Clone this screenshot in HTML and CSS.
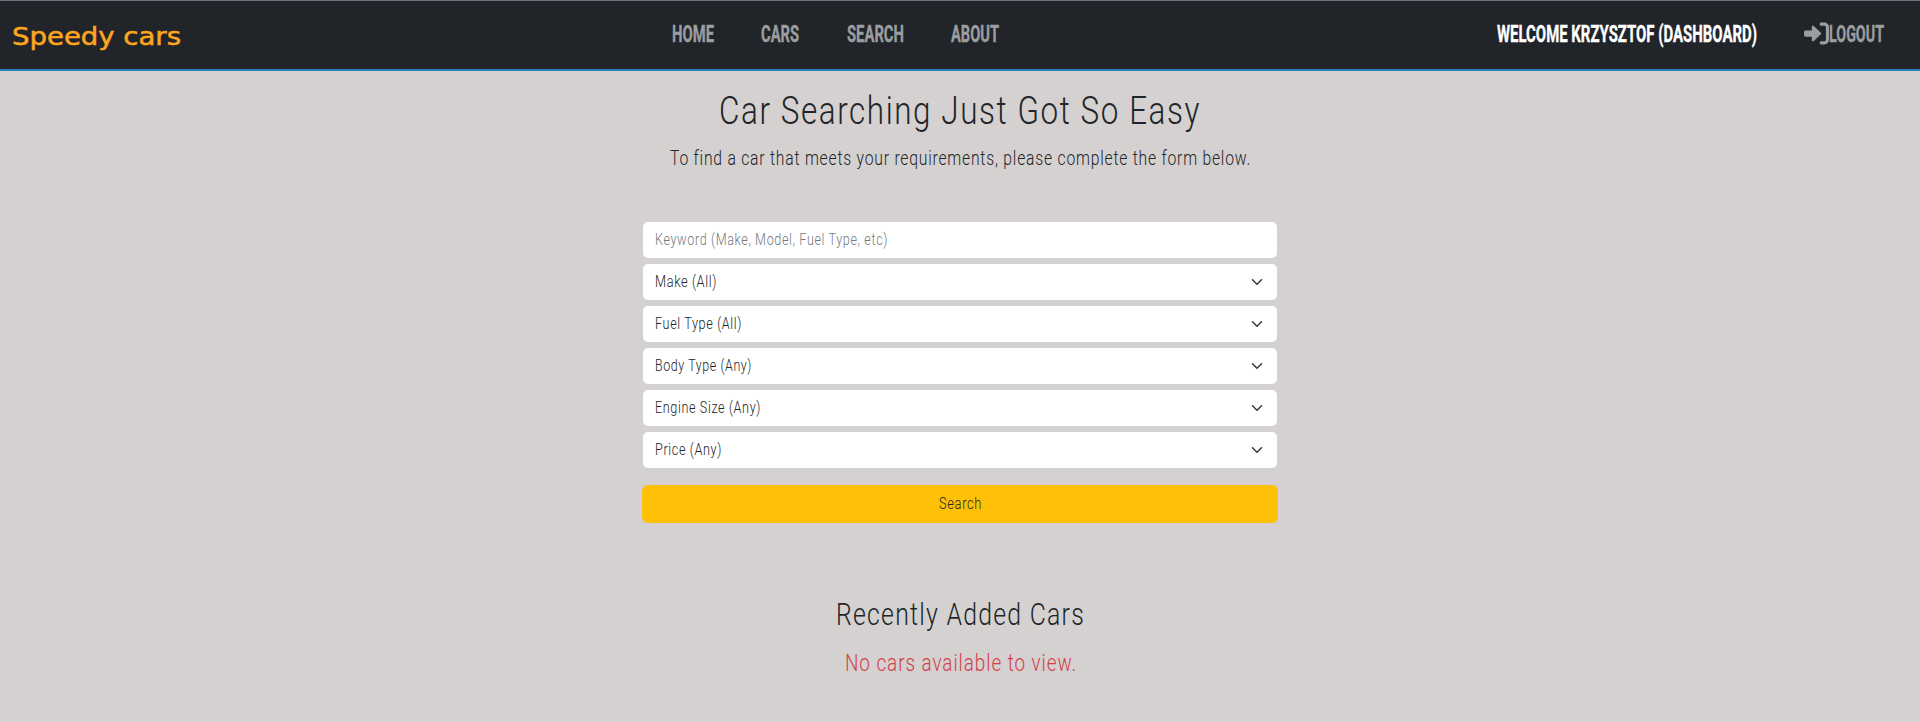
FILE: index.html
```html
<!DOCTYPE html>
<html lang="en">
<head>
<meta charset="utf-8">
<title>Speedy cars</title>
<link rel="stylesheet" href="styles.css">
</head>
<body>
<header class="navbar">
  <a class="brand"><svg class="line" width="169" height="34"><text x="0" y="25.500" textLength="169" lengthAdjust="spacingAndGlyphs">Speedy cars</text></svg></a>
  <nav class="menu">
    <a><svg class="line" width="42" height="34"><text x="0" y="25" textLength="42" lengthAdjust="spacingAndGlyphs">HOME</text></svg></a>
    <a><svg class="line" width="38" height="34"><text x="0" y="25" textLength="38" lengthAdjust="spacingAndGlyphs">CARS</text></svg></a>
    <a><svg class="line" width="57" height="34"><text x="0" y="25" textLength="57" lengthAdjust="spacingAndGlyphs">SEARCH</text></svg></a>
    <a><svg class="line" width="48" height="34"><text x="0" y="25" textLength="48" lengthAdjust="spacingAndGlyphs">ABOUT</text></svg></a>
  </nav>
  <div class="account">
    <a class="welcome"><svg class="line" width="260" height="34"><text x="0" y="25" textLength="260" lengthAdjust="spacingAndGlyphs">WELCOME KRZYSZTOF (DASHBOARD)</text></svg></a>
    <a class="logout">
      <svg class="icon" width="25" height="25" viewBox="0 0 512 512"><path d="M352 96h64c17.700 0 32 14.300 32 32v256c0 17.700-14.300 32-32 32h-64c-17.700 0-32 14.300-32 32s14.300 32 32 32h64c53 0 96-43 96-96V128c0-53-43-96-96-96h-64c-17.700 0-32 14.300-32 32s14.300 32 32 32zm-7.500 177.400c4.800-4.500 7.500-10.800 7.500-17.400s-2.700-12.900-7.500-17.400l-144-136c-7-6.600-17.200-8.400-26-4.600S160 110.400 160 120v72H32c-17.700 0-32 14.300-32 32v64c0 17.700 14.300 32 32 32h128v72c0 9.600 5.700 18.200 14.500 22s19 2 26-4.600l144-136z"/></svg>
      <svg class="line" width="55" height="34"><text x="0" y="25" textLength="55" lengthAdjust="spacingAndGlyphs">LOGOUT</text></svg>
    </a>
  </div>
</header>
<main class="page">
  <h1><svg class="line" width="482" height="48"><text x="0" y="38" textLength="482" lengthAdjust="spacingAndGlyphs">Car Searching Just Got So Easy</text></svg></h1>
  <p class="lead"><svg class="line" width="580" height="30"><text x="0" y="21" textLength="581" lengthAdjust="spacingAndGlyphs">To find a car that meets your requirements, please complete the form below.</text></svg></p>
  <form class="search">
    <div class="field keyword"><svg class="line" width="232" height="24"><text x="0" y="17" textLength="233" lengthAdjust="spacingAndGlyphs">Keyword (Make, Model, Fuel Type, etc)</text></svg></div>
    <div class="field"><svg class="line" width="61" height="24"><text x="0" y="17" textLength="62" lengthAdjust="spacingAndGlyphs">Make (All)</text></svg><svg class="chevron" viewBox="0 0 16 16"><path d="m2 5 6 6 6-6"/></svg></div>
    <div class="field"><svg class="line" width="86" height="24"><text x="0" y="17" textLength="87" lengthAdjust="spacingAndGlyphs">Fuel Type (All)</text></svg><svg class="chevron" viewBox="0 0 16 16"><path d="m2 5 6 6 6-6"/></svg></div>
    <div class="field"><svg class="line" width="96" height="24"><text x="0" y="17" textLength="97" lengthAdjust="spacingAndGlyphs">Body Type (Any)</text></svg><svg class="chevron" viewBox="0 0 16 16"><path d="m2 5 6 6 6-6"/></svg></div>
    <div class="field"><svg class="line" width="105" height="24"><text x="0" y="17" textLength="106" lengthAdjust="spacingAndGlyphs">Engine Size (Any)</text></svg><svg class="chevron" viewBox="0 0 16 16"><path d="m2 5 6 6 6-6"/></svg></div>
    <div class="field"><svg class="line" width="66" height="24"><text x="0" y="17" textLength="67" lengthAdjust="spacingAndGlyphs">Price (Any)</text></svg><svg class="chevron" viewBox="0 0 16 16"><path d="m2 5 6 6 6-6"/></svg></div>
    <div class="submit"><svg class="line" width="42" height="24"><text x="0" y="17" textLength="43" lengthAdjust="spacingAndGlyphs">Search</text></svg></div>
  </form>
  <h2><svg class="line" width="249" height="40"><text x="0" y="30" textLength="249" lengthAdjust="spacingAndGlyphs">Recently Added Cars</text></svg></h2>
  <p class="empty"><svg class="line" width="231" height="32"><text x="0" y="24" textLength="232" lengthAdjust="spacingAndGlyphs">No cars available to view.</text></svg></p>
</main>
</body>
</html>
```
FILE: styles.css
```css
* { box-sizing: border-box; }
body {
  margin: 0;
  min-height: 722px;
  background: #d5d1d0;
  color: #212529;
  font-family: Roboto, "Liberation Sans", sans-serif;
  font-weight: 300;
}
h1, h2, p { margin: 0; font-weight: 300; }
.line { display: block; fill: currentColor; overflow: visible; flex: none; }
.page .line { letter-spacing: .05em; }

.navbar {
  display: grid;
  grid-template-columns: 660px 1fr auto;
  height: 71px;
  padding: 16px 36px 0 12px;
  background: #212529;
  border-top: 1px solid #6c757d;
  border-bottom: 2px solid #2a80b9;
  color: #9b9d9f;
  font-size: 24px;
  font-weight: 700;
}
.navbar .menu text, .account text { stroke: currentColor; stroke-width: .4px; }
.brand { padding-top: 2px; color: #ffa51f; font-family: "DejaVu Sans", sans-serif; font-size: 24px; font-weight: 400; }
.brand text { stroke: currentColor; stroke-width: .5px; }
.menu { display: flex; gap: 47.300px; }
.account { display: flex; gap: 47px; }
.welcome { color: #fff; }
.logout { display: flex; }
.icon { display: block; margin-top: 4px; fill: currentColor; }

.page { display: flex; flex-direction: column; align-items: center; }
h1 { margin-top: 15px; font-size: 39.500px; }
.lead { margin-top: 10px; font-size: 19.700px; }
.search {
  display: flex;
  flex-direction: column;
  gap: 6px;
  width: 636px;
  margin-top: 48px;
  font-size: 16px;
}
.field {
  display: flex;
  align-items: center;
  justify-content: space-between;
  height: 36px;
  margin: 0 1px;
  padding: 0 12px;
  background: #fff;
  border-radius: 5px;
  box-shadow: 0 0 0 1px #d0d2d3;
}
.keyword { color: #73797f; }
.chevron {
  width: 16px;
  height: 12px;
  fill: none;
  stroke: #343a40;
  stroke-width: 2;
  stroke-linecap: round;
  stroke-linejoin: round;
}
.submit {
  display: flex;
  align-items: center;
  justify-content: center;
  height: 38px;
  margin-top: 11px;
  background: #ffc107;
  border-radius: 6px;
}
h2 { margin-top: 72px; font-size: 31.500px; }
.empty { margin-top: 12px; color: #d23f4c; font-size: 23.700px; }
```
